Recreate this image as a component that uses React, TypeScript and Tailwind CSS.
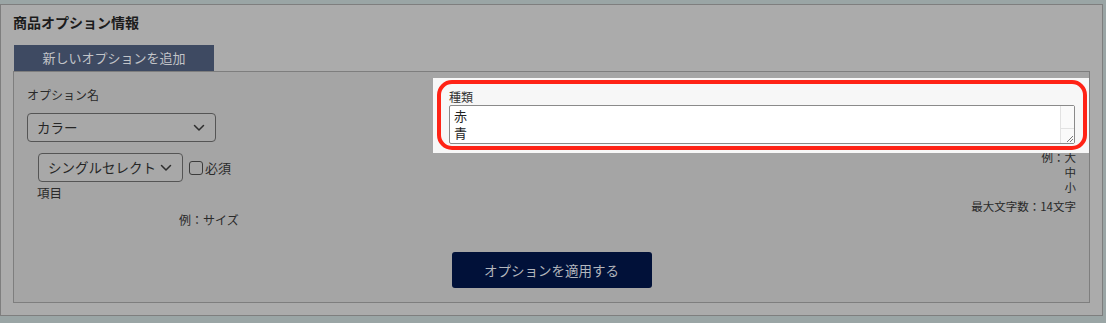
import React from 'react';

const FONT = { fontFamily: '"Noto Sans CJK JP", "Noto Sans", sans-serif' };

function Chevron({ className = '' }: { className?: string }) {
  return (
    <svg width="12" height="8" viewBox="0 0 12 8" className={className} fill="none">
      <path d="M1.5 1.5 L6 6 L10.5 1.5" stroke="#2e2e2e" strokeWidth="1.5" strokeLinecap="round" strokeLinejoin="round" />
    </svg>
  );
}

function FakeSelect({ label, width }: { label: string; width: string }) {
  return (
    <div
      className={`${width} h-[29px] flex items-center justify-between rounded-[4px] border border-[#555555] bg-[#a8a8a8] pl-[9px] pr-[10px] text-[13.5px] text-[#262626]`}
    >
      <span>{label}</span>
      <Chevron />
    </div>
  );
}

export default function App() {
  return (
    <div className="w-[1106px] h-[323px] bg-[#9aa5a5] pt-[4px]" style={FONT}>
      <div className="w-[1103px] h-[312px] border border-[#7e7e7e] bg-[#ababab] px-[12px] pt-[7px]">
        {/* Title */}
        <h2 className="text-[14px] leading-[20px] font-bold text-[#1c1c1c]">商品オプション情報</h2>

        {/* Tab */}
        <div className="mt-[13px] ml-[1px] w-[200px] h-[26px] bg-[#3e4a62] flex items-center justify-center text-[13px] text-[#c2c4c8]">
          新しいオプションを追加
        </div>

        {/* Panel */}
        <div className="h-[232px] border border-[#7e7e7e] bg-[#a5a5a5] pt-[6px]">
          <div className="flex items-start">
            {/* Left column */}
            <div className="w-[419px] pl-[13px] pt-[9px] text-[#2a2a2a]">
              <div className="text-[12px] leading-[16px]">オプション名</div>
              <div className="mt-[10px]">
                <FakeSelect label="カラー" width="w-[189px]" />
              </div>
              <div className="mt-[11px] ml-[11px] flex items-center">
                <FakeSelect label="シングルセレクト" width="w-[145px]" />
                <div className="ml-[6px] w-[14px] h-[14px] rounded-[3px] border border-[#3c3c3c]" />
                <span className="ml-[2px] text-[13px] leading-[16px]">必須</span>
              </div>
              <div className="mt-[3px] ml-[10px] text-[12.5px] leading-[16px]">項目</div>
              <div className="mt-[11px] ml-[152px] text-[12px] leading-[16px]">例：サイズ</div>
            </div>

            {/* Right column */}
            <div className="flex-1 flex flex-col">
              <div className="relative z-10 h-[75px] bg-[#f7f7f7] pl-[4px] pr-[2px] pt-[2px]">
                <div className="h-[70px] rounded-[15px] border-[4px] border-[#ff2316] px-[8px] pt-[4px]">
                  <div className="text-[12px] leading-[17px] text-[#333333]">種類</div>
                  <div className="h-[39px] flex rounded-[2px] border border-[#8a8a8a] bg-white">
                    <div className="flex-1 pl-[4px] pt-[1px] text-[13px] leading-[17px] text-[#222222]">
                      <div>赤</div>
                      <div>青</div>
                    </div>
                    <div className="w-[14px] flex flex-col border-l border-[#e2e2e2] bg-[#fafafa]">
                      <div className="h-[23px] border-b border-[#e2e2e2]" />
                      <div className="flex-1 flex items-end justify-end">
                        <svg width="10" height="10" viewBox="0 0 10 10">
                          <path d="M9 3 L3 9 M9 6 L6 9" stroke="#7a7a7a" strokeWidth="1" />
                        </svg>
                      </div>
                    </div>
                  </div>
                </div>
              </div>
              <div className="-mt-[3px] pr-[13px] text-right text-[11.5px] text-[#2a2a2a]">
                <div className="leading-[15px]">例：大</div>
                <div className="leading-[15px]">中</div>
                <div className="leading-[15px]">小</div>
                <div className="mt-[3px] leading-[16px]">最大文字数：14文字</div>
              </div>
            </div>
          </div>

          {/* Apply button */}
          <div className="mt-[24px] flex justify-center">
            <div className="w-[200px] h-[36px] rounded-[3px] bg-[#011139] flex items-center justify-center text-[13.5px] text-[#b3b6bd]">
              オプションを適用する
            </div>
          </div>
        </div>
      </div>
    </div>
  );
}
